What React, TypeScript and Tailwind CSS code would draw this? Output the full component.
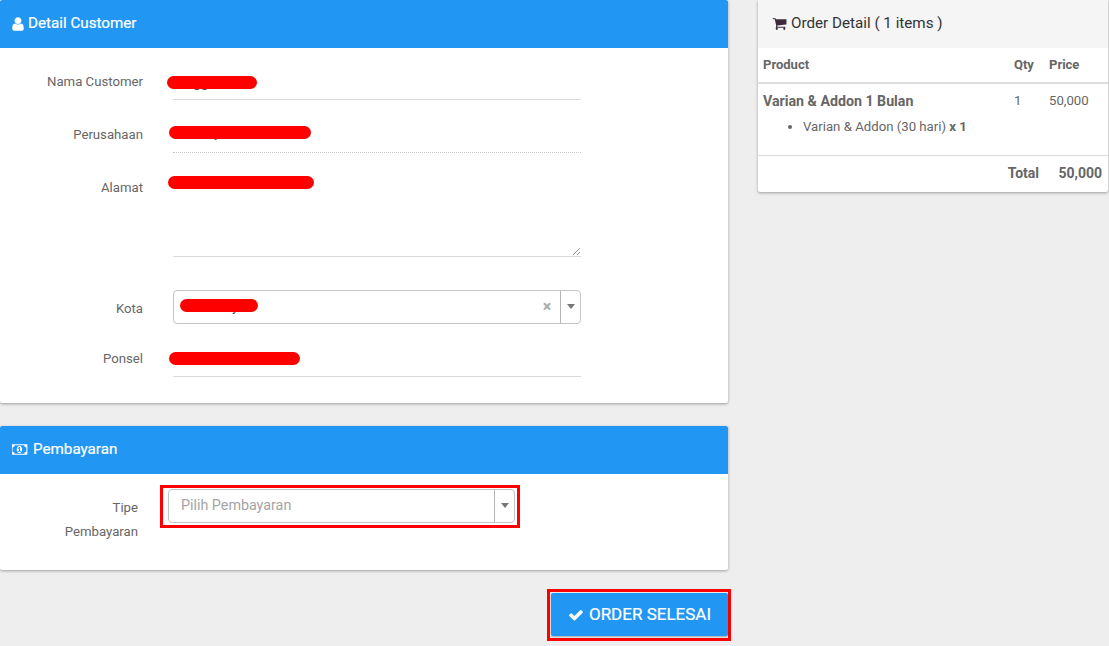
import React from 'react';

const Icon: React.FC<{ d: string; size: number; vb?: string; className?: string }> = ({ d, size, vb = '0 0 1792 1792', className = '' }) => (
  <svg width={size} height={size} viewBox={vb} fill="currentColor" className={`shrink-0 ${className}`}>
    <path d={d} />
  </svg>
);

const userPath = 'M1536 1399q0 109-62.5 187t-150.5 78h-854q-88 0-150.5-78t-62.5-187q0-85 8.5-160.5t31.5-152 58.5-131 94-89 134.5-34.5q131 128 313 128t313-128q76 0 134.5 34.5t94 89 58.5 131 31.5 152 8.5 160.5zm-256-887q0 159-112.5 271.5t-271.5 112.5-271.5-112.5-112.5-271.5 112.5-271.5 271.5-112.5 271.5 112.5 112.5 271.5z';
const moneyPath = 'M704 1152h384v-96h-128v-448h-114l-148 137 77 80q42-37 55-57h2v288h-128v96zm512-256q0 70-21 142t-59.5 134-101.5 101-138 39-138-39-101.5-101-59.5-134-21-142 21-142 59.5-134 101.5-101 138-39 138 39 101.5 101 59.5 134 21 142zm512 256v-512q-106 0-181-75t-75-181h-1152q0 106-75 181t-181 75v512q106 0 181 75t75 181h1152q0-106 75-181t181-75zm128-832v1152q0 26-19 45t-45 19h-1792q-26 0-45-19t-19-45v-1152q0-26 19-45t45-19h1792q26 0 45 19t19 45z';
const checkPath = 'M1671 566q0 40-28 68l-724 724-136 136q-28 28-68 28t-68-28l-136-136-362-362q-28-28-28-68t28-68l136-136q28-28 68-28t68 28l294 295 656-657q28-28 68-28t68 28l136 136q28 28 28 68z';
const cartPath = 'M704 1536q0 52-38 90t-90 38-90-38-38-90 38-90 90-38 90 38 38 90zm896 0q0 52-38 90t-90 38-90-38-38-90 38-90 90-38 90 38 38 90zm128-1088v512q0 24-16.5 42.5t-40.5 21.5l-1044 122q13 60 13 70 0 16-24 64h920q26 0 45 19t19 45-19 45-45 19h-1024q-26 0-45-19t-19-45q0-11 8-31.5t16-36 21.5-40 15.5-29.5l-177-823h-204q-26 0-45-19t-19-45 19-45 45-19h256q16 0 28.5 6.5t19.5 15.5 13 24.5 8 26 5.5 29.5 4.5 26h1201q26 0 45 19t19 45z';

const Scribble: React.FC<{ className: string }> = ({ className }) => (
  <div className={`absolute h-[13px] rounded-full bg-[#ff0000] ${className}`}></div>
);

const Label: React.FC<{ children: React.ReactNode; className?: string }> = ({ children, className = '' }) => (
  <div className={`w-[143px] shrink-0 text-right text-[13.2px] leading-[20px] text-[#666] ${className}`}>{children}</div>
);

const Row: React.FC<{ label: string; labelClass: string; children: React.ReactNode; className?: string }> = ({ label, labelClass, children, className = '' }) => (
  <div className={`flex ${className}`}>
    <Label className={labelClass}>{label}</Label>
    <div className="relative ml-[30px] w-[408px]">{children}</div>
  </div>
);

const SelectBox: React.FC<{ className: string; children?: React.ReactNode; clear?: boolean }> = ({ className, children, clear }) => (
  <div className={`flex items-stretch rounded-[4px] border border-[#c4c4c4] bg-white ${className}`}>
    <div className="flex min-w-0 flex-1 items-center pl-[12px] text-[14.3px] text-[#a5a5a5]">{children}</div>
    {clear && <div className="flex w-[26px] items-center justify-center pb-[1px] text-[16px] font-bold leading-none text-[#aaa]">×</div>}
    <div className="flex w-[20px] items-center justify-center border-l border-[#b5b5b5] pb-[2px]">
      <div className="h-0 w-0 border-x-[4px] border-t-[5px] border-x-transparent border-t-[#777]"></div>
    </div>
  </div>
);

const CardHeader: React.FC<{ icon: React.ReactNode; title: string; className: string }> = ({ icon, title, className }) => (
  <div className={`flex h-[48px] items-center rounded-t-[2px] bg-[#2196f3] pb-[1px] pl-[12px] text-[15.2px] text-white ${className}`}>
    {icon}
    <span className="pb-[1px] [-webkit-text-stroke:0.2px_white]">{title}</span>
  </div>
);

const App: React.FC = () => {
  return (
    <div className="flex h-[646px] w-[1109px] items-start overflow-hidden bg-[#eeeeee] font-['Roboto',sans-serif]">
      {/* Left column */}
      <div className="w-[728px] shrink-0">
        <div className="rounded-b-[2px] bg-white shadow-[0_1px_3px_rgba(0,0,0,0.35)]">
          <CardHeader className="gap-[3px]" icon={<Icon d={userPath} size={16} className="-ml-[2px] -mr-[1px]" />} title="Detail Customer" />
          <div className="h-[355px] pt-[17px]">
            <Row label="Nama Customer" labelClass="pt-[7px]">
              <div className="h-[35px] border-b border-[#d9d9d9]"></div>
              <span className="absolute left-[20px] top-[7px] text-[14px] leading-[20px] text-[#555]">gg</span>
              <Scribble className="-left-[6px] top-[11px] w-[90px]" />
            </Row>
            <Row label="Perusahaan" labelClass="pt-[7px]" className="mt-[18px]">
              <div className="h-[35px] border-b border-dotted border-[#c8c8c8]"></div>
              <span className="absolute left-[41px] top-[4px] text-[14px] leading-[20px] text-[#555]">y</span>
              <Scribble className="-left-[4px] top-[8px] w-[142px]" />
            </Row>
            <Row label="Alamat" labelClass="pt-[7px]" className="mt-[18px]">
              <div className="relative h-[86px] border-b border-[#d9d9d9]">
                <svg className="absolute bottom-0 right-0" width="9" height="9" viewBox="0 0 9 9">
                  <path d="M1 8 L8 1 M5 8 L8 5" stroke="#666" strokeWidth="1" strokeDasharray="1 0.5" fill="none" />
                </svg>
              </div>
              <Scribble className="-left-[5px] top-[5px] w-[146px]" />
            </Row>
            <Row label="Kota" labelClass="pt-[9px]" className="mt-[33px]">
              <SelectBox className="h-[34px]" clear />
              <span className="absolute left-[59px] top-[6px] text-[14px] leading-[20px] text-[#555]">y</span>
              <Scribble className="left-[7px] top-[9px] w-[78px]" />
            </Row>
            <Row label="Ponsel" labelClass="pt-[7px]" className="mt-[18px]">
              <div className="h-[35px] border-b border-[#d9d9d9]"></div>
              <Scribble className="-left-[4px] top-[10px] w-[131px]" />
            </Row>
          </div>
        </div>

        <div className="mt-[23px] rounded-b-[2px] bg-white shadow-[0_1px_3px_rgba(0,0,0,0.35)]">
          <CardHeader className="gap-[4px]" icon={<Icon d={moneyPath} size={17} vb="0 0 2048 1792" />} title="Pembayaran" />
          <div className="flex h-[96px] pt-[11px]">
            <div className="w-[138px] shrink-0 pt-[11px] text-right text-[13.2px] leading-[24px] text-[#666]">
              Tipe<br />Pembayaran
            </div>
            <div className="ml-[22px] h-[43px] w-[360px] border-[3px] border-[#ff0000] pl-[5px] pt-[1px]">
              <SelectBox className="h-[34px] w-[347px]">Pilih Pembayaran</SelectBox>
            </div>
          </div>
        </div>

        <div className="mt-[19px] flex justify-end">
          <div className="-mr-[3px] h-[52px] w-[184px] border-[3px] border-[#ff0000] p-[1px]">
            <button className="flex h-[43px] w-[177px] items-center justify-center gap-[5px] rounded-[2px] bg-[#2196f3] text-[17px] text-white shadow-[0_1px_2px_rgba(0,0,0,0.3)] [-webkit-text-stroke:0.2px_white]">
              <Icon d={checkPath} size={16} />
              ORDER SELESAI
            </button>
          </div>
        </div>
      </div>

      {/* Right column */}
      <div className="ml-[30px] w-[350px] shrink-0 rounded-b-[2px] bg-white text-[13.2px] text-[#666] shadow-[0_1px_3px_rgba(0,0,0,0.35)]">
        <div className="flex h-[48px] items-center gap-[4px] bg-[#f5f5f5] pb-[2px] pl-[14px] text-[15.2px] text-[#333]">
          <Icon d={cartPath} size={15} className="text-[#3a2a3a]" />
          <span>Order Detail ( 1 items )</span>
        </div>
        <table className="w-full table-fixed border-collapse">
          <thead>
            <tr className="h-[35px] border-b-2 border-[#dddddd] text-left text-[13px] font-bold">
              <th className="w-[251px] pl-[5px]">Product</th>
              <th className="w-[35px] pl-[5px]">Qty</th>
              <th className="pl-[5px]">Price</th>
            </tr>
          </thead>
          <tbody>
            <tr className="h-[72px] border-b border-[#dddddd] align-top">
              <td className="pl-[5px] pt-[8px]">
                <div className="text-[14.2px] font-bold leading-[18px]">Varian &amp; Addon 1 Bulan</div>
                <ul className="mt-[8px] list-disc pl-[40px] leading-[18px]">
                  <li>Varian &amp; Addon (30 hari) <b>x 1</b></li>
                </ul>
              </td>
              <td className="pl-[5px] pt-[8px] leading-[18px]">1</td>
              <td className="pl-[5px] pt-[8px] leading-[18px]">50,000</td>
            </tr>
            <tr className="h-[37px] text-[14px] font-bold">
              <td colSpan={2} className="pr-[5px] text-right">Total</td>
              <td className="pr-[6px] text-right">50,000</td>
            </tr>
          </tbody>
        </table>
      </div>
    </div>
  );
};

export default App;
